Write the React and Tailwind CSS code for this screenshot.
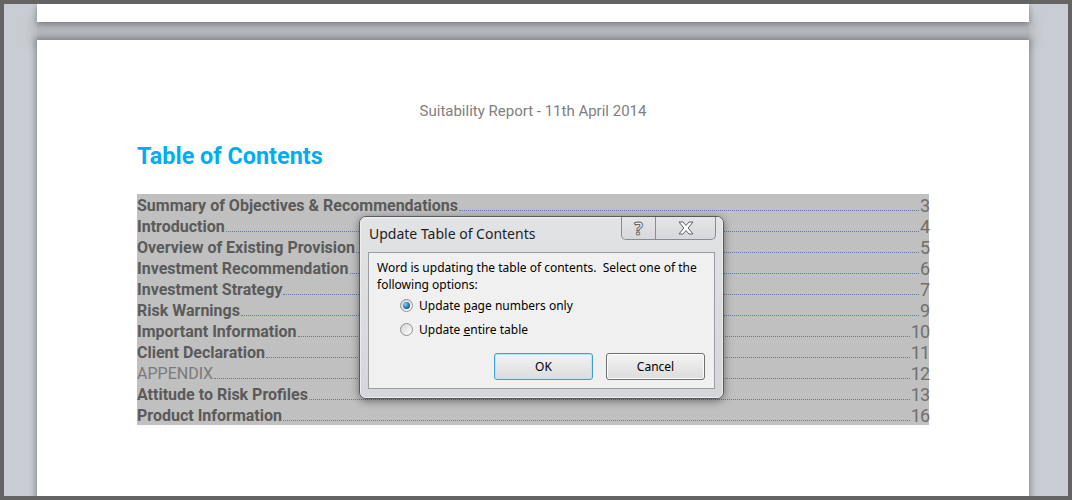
import React from "react";

const rows = [
  { t: "Summary of Objectives & Recommendations", n: "3" },
  { t: "Introduction", n: "4" },
  { t: "Overview of Existing Provision", n: "5" },
  { t: "Investment Recommendation", n: "6" },
  { t: "Investment Strategy", n: "7" },
  { t: "Risk Warnings", n: "9" },
  { t: "Important Information", n: "10" },
  { t: "Client Declaration", n: "11" },
  { t: "APPENDIX", n: "12", plain: true },
  { t: "Attitude to Risk Profiles", n: "13" },
  { t: "Product Information", n: "16" },
];

function Radio({ checked }) {
  return (
    <span className="relative inline-flex w-[13px] h-[13px] rounded-full border border-[#8e8f8f] bg-gradient-to-br from-[#d4d4d4] to-[#ffffff] items-center justify-center">
      {checked && (
        <span className="w-[7px] h-[7px] rounded-full bg-[radial-gradient(circle_at_35%_35%,#7ad0f5,#1a6ea8_60%,#0d3f63)]" />
      )}
    </span>
  );
}

export default function App() {
  return (
    <div className="w-[1072px] h-[500px] bg-[#646464] p-[4px] overflow-hidden">
      <div className="relative h-full bg-[#c9cdd3] pl-[33px] overflow-hidden">
        <div className="relative z-[1] w-[992px] h-[18px] bg-white shadow-[0_2px_6px_rgba(0,0,0,0.35)]" />
        <div className="w-[992px] h-[18px] bg-[#b3b7bc] shadow-[0_0_10px_6px_#b8bcc1]" />
        <div
          className="relative z-[1] w-[992px] h-[460px] bg-white shadow-[0_0_6px_2px_rgba(0,0,0,0.3)] px-[100px] pt-[62px]"
          style={{ fontFamily: "Roboto, 'Liberation Sans', sans-serif" }}
        >
          <div className="text-center text-[15px] leading-[19px] text-[#808080]">
            Suitability Report - 11th April 2014
          </div>
          <div className="mt-[21px] text-[23.4px] leading-[28px] font-bold text-[#00aeef]">
            Table of Contents
          </div>
          <div className="mt-[24px] bg-[#c0c0c0]">
            {rows.map((r) => (
              <div key={r.t} className="flex items-center h-[21px]">
                <span
                  className={
                    r.plain
                      ? "text-[16px] leading-[21px] pt-[2px] text-[#7a7a7a] whitespace-nowrap"
                      : "text-[16px] leading-[21px] pt-[2px] font-bold text-[#5a5a5a] whitespace-nowrap"
                  }
                >
                  {r.t}
                </span>
                <span className="self-end flex-1 mb-[4px] mx-[1px] border-b border-dotted border-[#5d7aa3]" />
                <span className="text-[18px] leading-[21px] pt-[2px] text-[#707070] tracking-[-1px]">
                  {r.n}
                </span>
              </div>
            ))}
          </div>
        </div>

        {/* Dialog */}
        <div
          className="absolute z-10 left-[355px] top-[212px] w-[365px] h-[183px] rounded-[7px] border border-[#555a60] bg-gradient-to-b from-[#e2e3e5] to-[#d4d6d9] shadow-[0_2px_8px_rgba(0,0,0,0.45)]"
          style={{ fontFamily: "'Noto Sans', 'Open Sans', sans-serif" }}
        >
          <div className="absolute inset-0 rounded-[6px] border border-[#f4f4f4]/70 pointer-events-none" />
          <div className="absolute left-[9px] top-[7px] text-[14px] leading-[20px] text-[#1e1e1e]">
            Update Table of Contents
          </div>
          <div className="absolute right-[7px] top-[0px] flex h-[23px] rounded-b-[5px] border border-t-0 border-[#8a8c90] bg-gradient-to-b from-[#e4e5e7] to-[#d7d8db]">
            <div className="w-[34px] flex items-center justify-center border-r border-[#8a8c90]">
              <span className="text-[18px] leading-[22px] font-bold text-white [-webkit-text-stroke:1px_#5e6166]">
                ?
              </span>
            </div>
            <div className="w-[59px] flex items-center justify-center">
              <svg width="18" height="14" viewBox="0 0 18 14">
                <path
                  d="M2 1 H6 L9 4.5 L12 1 H16 L11.2 7 L16 13 H12 L9 9.5 L6 13 H2 L6.8 7 Z"
                  fill="#ffffff"
                  stroke="#5e6166"
                  strokeWidth="1"
                  strokeLinejoin="round"
                />
              </svg>
            </div>
          </div>
          <div className="absolute left-[8px] right-[8px] top-[35px] bottom-[9px] border border-[#9a9da2] bg-[#f0f0f0] px-[8px] pt-[6px] text-[12px] leading-[17px] text-black">
            <div>
              Word is updating the table of contents.&nbsp; Select one of the
              <br />
              following options:
            </div>
            <div className="mt-[4px] ml-[23px] flex flex-col gap-[7px]">
              <label className="flex items-center gap-[6px] h-[17px]">
                <Radio checked />
                <span>
                  Update <span className="underline">p</span>age numbers only
                </span>
              </label>
              <label className="flex items-center gap-[6px] h-[17px]">
                <Radio />
                <span>
                  Update <span className="underline">e</span>ntire table
                </span>
              </label>
            </div>
            <div className="absolute right-[9px] bottom-[8px] flex gap-[13px]">
              <button className="w-[99px] h-[27px] rounded-[3px] border border-[#3c9fd8] bg-gradient-to-b from-[#f3f3f3] to-[#dcdcdc] text-[12px] shadow-[inset_0_0_0_1px_#bfe3f6]">
                OK
              </button>
              <button className="w-[99px] h-[27px] rounded-[3px] border border-[#707070] bg-gradient-to-b from-[#f3f3f3] to-[#dcdcdc] text-[12px] shadow-[inset_0_0_0_1px_#fcfcfc]">
                Cancel
              </button>
            </div>
          </div>
        </div>
      </div>
    </div>
  );
}
